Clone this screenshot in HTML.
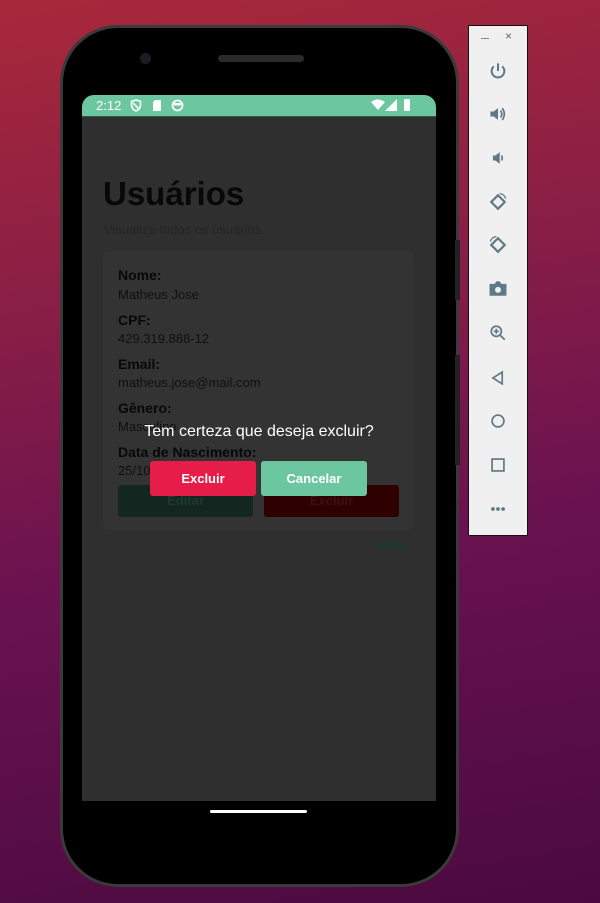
<!DOCTYPE html>
<html><head><meta charset="utf-8"><style>
*{margin:0;padding:0;box-sizing:border-box}
body{width:600px;height:903px;overflow:hidden;position:relative;font-family:"Liberation Sans",Roboto,sans-serif;
background:linear-gradient(170deg,#a8283a 0%,#8a1f45 30%,#6a1250 60%,#4a0a40 100%);}
.abs{position:absolute}
.phone{left:60px;top:25px;width:399px;height:862px;border-radius:58px;background:#000;border:3px solid #3a3a3a}
.screen{left:82px;top:95px;width:354px;height:706px;background:#2f2f2f;border-radius:12px 12px 0 0;overflow:hidden}
.sb{left:0;top:0;width:354px;height:21px;background:#6cc7a0;color:#fff;font-size:13px}
.t{color:#080808}
.lab{font-weight:bold;font-size:14px;color:#080808;position:absolute;left:36px}
.val{font-size:13px;color:#101010;position:absolute;left:36px}
.panel{left:468px;top:25px;width:60px;height:511px;background:#f0f0f0;border:1px solid #111}
.ic{position:absolute;left:18px;width:22px;height:22px}
</style></head><body>
<div class="abs phone"></div>
<div class="abs" style="left:455px;top:240px;width:5px;height:60px;background:#222"></div>
<div class="abs" style="left:455px;top:355px;width:5px;height:110px;background:#222"></div>
<div class="abs" style="left:140px;top:53px;width:11px;height:11px;border-radius:50%;background:#1c1c28"></div>
<div class="abs" style="left:218px;top:55px;width:86px;height:7px;border-radius:4px;background:#2a2a2a"></div>
<div class="abs screen">
 <div class="abs sb">
  <span class="abs" style="left:14px;top:3px">2:12</span>
  <svg class="abs" style="left:48px;top:4px" width="12" height="13" viewBox="0 0 12 13"><path d="M6 1L1.5 2.5V6c0 3 2 5 4.5 6 2.5-1 4.5-3 4.5-6V2.5z M3 4L9 10" fill="none" stroke="#fff" stroke-width="1.6"/></svg>
  <svg class="abs" style="left:70px;top:4px" width="10" height="13"><path d="M3 1H9V12H1V3z" fill="#fff"/></svg>
  <svg class="abs" style="left:89px;top:4px" width="13" height="13"><circle cx="6.5" cy="6.5" r="5" fill="none" stroke="#fff" stroke-width="1.8"/><rect x="3" y="4" width="7" height="2.5" fill="#fff"/></svg>
  <svg class="abs" style="left:289px;top:4px" width="14" height="12"><path d="M0 3Q7-2 14 3L7 11z" fill="#fff"/></svg>
  <svg class="abs" style="left:303px;top:4px" width="12" height="12"><path d="M12 0V12H0z" fill="#fff"/></svg>
  <div class="abs" style="left:322px;top:4px;width:6px;height:12px;background:#fff;border-radius:1px"></div>
 </div>
 <div class="abs" style="left:0;top:21px;width:354px;height:1px;background:#2a5a48"></div>
 <div class="abs t" style="left:21px;top:80px;font-size:33px;font-weight:bold">Usuários</div>
 <div class="abs" style="left:22px;top:127px;font-size:13px;color:#242424">Visualize todos os usuários.</div>
 <div class="abs" style="left:21px;top:156px;width:311px;height:279px;background:#333;border-radius:6px">
  <div class="lab" style="top:16px;left:15px">Nome:</div><div class="val" style="top:36px;left:15px">Matheus Jose</div>
  <div class="lab" style="top:61px;left:15px">CPF:</div><div class="val" style="top:80px;left:15px">429.319.888-12</div>
  <div class="lab" style="top:105px;left:15px">Email:</div><div class="val" style="top:124px;left:15px">matheus.jose@mail.com</div>
  <div class="lab" style="top:149px;left:15px">Gênero:</div><div class="val" style="top:168px;left:15px">Masculino</div>
  <div class="lab" style="top:193px;left:15px">Data de Nascimento:</div><div class="val" style="top:212px;left:15px">25/10/1990</div>
  <div class="abs" style="left:15px;top:234px;width:135px;height:32px;background:#132620;border-radius:3px;color:#1e3a30;font-weight:bold;font-size:13px;text-align:center;line-height:32px">Editar</div>
  <div class="abs" style="left:161px;top:234px;width:135px;height:32px;background:#2e0000;border-radius:3px;color:#401010;font-weight:bold;font-size:13px;text-align:center;line-height:32px">Excluir</div>
 </div>
 <div class="abs" style="left:293px;top:443px;font-size:12px;font-weight:bold;color:#163a2c">Voltar</div>
 <div class="abs" style="left:0;top:328px;width:354px;text-align:center;color:#fff;font-size:16px">Tem certeza que deseja excluir?</div>
 <div class="abs" style="left:68px;top:366px;width:106px;height:35px;background:#e51d48;border-radius:3px;color:#fff;font-weight:bold;font-size:13px;text-align:center;line-height:35px">Excluir</div>
 <div class="abs" style="left:179px;top:366px;width:106px;height:35px;background:#6cc7a0;border-radius:3px;color:#fff;font-weight:bold;font-size:13px;text-align:center;line-height:35px">Cancelar</div>
</div>
<div class="abs" style="left:210px;top:810px;width:97px;height:3px;border-radius:2px;background:#fff"></div>
<div class="abs panel">
 <div class="abs" style="left:12px;top:12px;width:8px;height:1px;background:#888"></div>
 <div class="abs" style="left:36px;top:3px;font-size:12px;color:#666">×</div>
 <svg class="ic" style="top:34px" viewBox="0 0 26 26"><path d="M13 4V13M8 7.5A7.5 7.5 0 1 0 18 7.5" fill="none" stroke="#5f7a86" stroke-width="2.4"/></svg>
 <svg class="ic" style="top:77px" viewBox="0 0 26 26"><path d="M4 10H8L13 6V20L8 16H4z" fill="#5f7a86"/><path d="M16 9Q19 13 16 17M18 6Q23 13 18 20" fill="none" stroke="#5f7a86" stroke-width="2"/></svg>
 <svg class="ic" style="top:121px" viewBox="0 0 26 26"><path d="M7 10H10L15 6V20L10 16H7z" fill="#5f7a86"/><path d="M17 10Q19 13 17 16" fill="none" stroke="#5f7a86" stroke-width="2"/></svg>
 <svg class="ic" style="top:165px" viewBox="0 0 26 26"><path d="M13 5L21 13L13 21L5 13z" fill="none" stroke="#5f7a86" stroke-width="2.6"/><path d="M15 3Q21 4 22 9" fill="none" stroke="#5f7a86" stroke-width="1.5"/></svg>
 <svg class="ic" style="top:208px" viewBox="0 0 26 26"><path d="M13 5L21 13L13 21L5 13z" fill="none" stroke="#5f7a86" stroke-width="2.6"/><path d="M11 3Q5 4 4 9" fill="none" stroke="#5f7a86" stroke-width="1.5"/></svg>
 <svg class="ic" style="top:252px" viewBox="0 0 26 26"><path d="M3 7H9L11 4H15L17 7H23V21H3z" fill="#5f7a86"/><circle cx="13" cy="14" r="3.5" fill="#f0f0f0"/></svg>
 <svg class="ic" style="top:296px" viewBox="0 0 26 26"><circle cx="11" cy="11" r="6" fill="none" stroke="#5f7a86" stroke-width="2"/><path d="M15.5 15.5L21 21M11 8V14M8 11H14" stroke="#5f7a86" stroke-width="2"/></svg>
 <svg class="ic" style="top:341px" viewBox="0 0 26 26"><path d="M18 6V20L7 13z" fill="none" stroke="#5f7a86" stroke-width="2"/></svg>
 <svg class="ic" style="top:384px" viewBox="0 0 26 26"><circle cx="13" cy="13" r="7" fill="none" stroke="#5f7a86" stroke-width="2"/></svg>
 <svg class="ic" style="top:428px" viewBox="0 0 26 26"><rect x="6" y="6" width="14" height="14" fill="none" stroke="#5f7a86" stroke-width="2"/></svg>
 <svg class="ic" style="top:472px" viewBox="0 0 26 26"><circle cx="7" cy="13" r="2.2" fill="#5f7a86"/><circle cx="13" cy="13" r="2.2" fill="#5f7a86"/><circle cx="19" cy="13" r="2.2" fill="#5f7a86"/></svg>
</div>
</body></html>
